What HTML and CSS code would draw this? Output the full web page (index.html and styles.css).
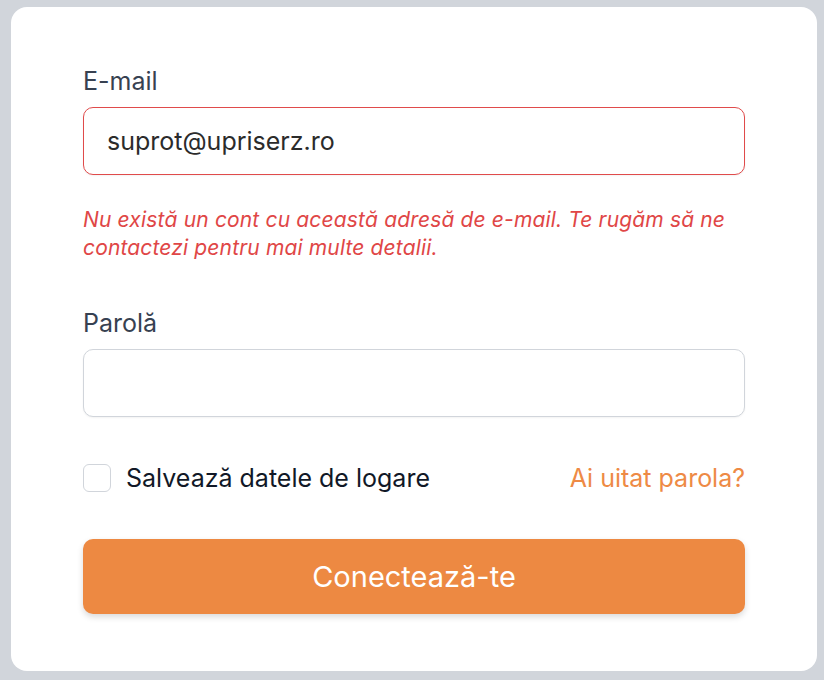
FILE: index.html
```html
<!DOCTYPE html>
<html lang="ro">
<head>
<meta charset="utf-8"/>
<link rel="stylesheet" href="styles.css">
</head>
<body>
  <div class="card">
    <form class="login">
      <div class="field">
        <label class="label" for="email">E-mail</label>
        <input class="input input-error" id="email" type="email" value="suprot@upriserz.ro">
        <p class="error">Nu există un cont cu această adresă de e-mail. Te rugăm să ne contactezi pentru mai multe detalii.</p>
      </div>

      <div class="field">
        <label class="label" for="password">Parolă</label>
        <input class="input" id="password" type="password">
      </div>

      <div class="row">
        <label class="remember">
          <span class="checkbox"></span>
          Salvează datele de logare
        </label>
        <a class="forgot" href="#">Ai uitat parola?</a>
      </div>

      <button class="submit" type="button">Conectează-te</button>
    </form>
  </div>
</body>
</html>
```

FILE: styles.css
```css
body {
  margin: 0;
  padding: 7px 7px 9px 11px;
  background: #d1d5db;
  font-family: Inter, "Noto Sans", sans-serif;
}

.card {
  background: #fff;
  border-radius: 16px;
  padding: 58px 72px 57px 72px;
}

.login {
  display: flex;
  flex-direction: column;
}

.field {
  display: flex;
  flex-direction: column;
}

.label {
  font-size: 25px;
  line-height: 32px;
  color: #374151;
  margin-bottom: 10px;
}

.input {
  box-sizing: border-box;
  height: 68px;
  border: 1px solid #d1d5db;
  border-radius: 10px;
  padding: 0 23px;
  font-family: inherit;
  font-size: 25px;
  color: #2b2b2b;
  box-shadow: 0 1px 2px rgba(0, 0, 0, 0.05);
  outline: none;
}

.input-error {
  border-color: #e04b4b;
}

.error {
  margin: 31px 0 0 0;
  font-size: 21px;
  line-height: 28px;
  letter-spacing: 0.15px;
  font-style: italic;
  color: #e04646;
}

.field + .field {
  margin-top: 45px;
}

.row {
  margin-top: 46px;
  height: 30px;
  display: flex;
  align-items: center;
  justify-content: space-between;
}

.remember {
  display: flex;
  align-items: center;
  gap: 15px;
  font-size: 25px;
  line-height: 30px;
  color: #111827;
}

.checkbox {
  box-sizing: border-box;
  width: 28px;
  height: 28px;
  border: 1px solid #d1d5db;
  border-radius: 6px;
  background: #fff;
}

.forgot {
  font-size: 25px;
  line-height: 30px;
  color: #ee8a45;
  text-decoration: none;
}

.submit {
  margin-top: 46px;
  height: 75px;
  border: none;
  border-radius: 10px;
  background: #ed8942;
  color: #fff;
  font-family: inherit;
  font-size: 29px;
  box-shadow: 0 3px 6px rgba(0, 0, 0, 0.15);
}
```
